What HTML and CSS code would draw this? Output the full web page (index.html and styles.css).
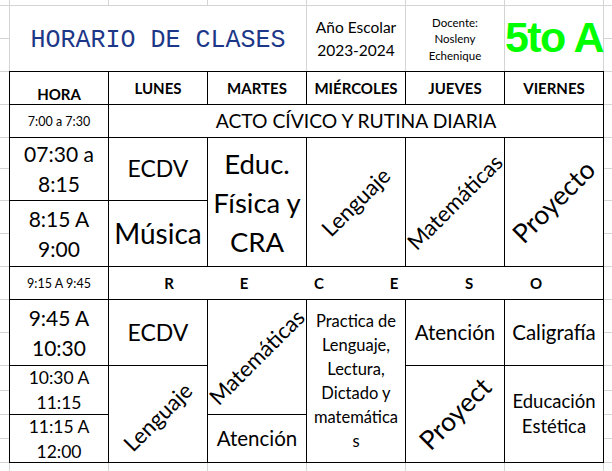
FILE: index.html
```html
<!DOCTYPE html>
<html lang="es">
<head>
<meta charset="utf-8">
<title>Horario de clases</title>
<link rel="stylesheet" href="styles.css">
</head>
<body>
<div class="sheet">
  <div class="strip"><span></span><span></span><span></span><span></span><span></span><span></span></div>
  <header class="title-row">
    <div class="tcell title">HORARIO DE CLASES</div>
    <div class="tcell year">Año Escolar<br>2023-2024</div>
    <div class="tcell teacher">Docente:<br>Nosleny<br>Echenique</div>
    <div class="tcell grade">5to A</div>
  </header>
  <div class="schedule">
    <div class="cell day hora">HORA</div>
    <div class="cell day">LUNES</div>
    <div class="cell day">MARTES</div>
    <div class="cell day">MIÉRCOLES</div>
    <div class="cell day">JUEVES</div>
    <div class="cell day">VIERNES</div>

    <div class="cell time-sm">7:00 a 7:30</div>
    <div class="cell wide act">ACTO CÍVICO Y RUTINA DIARIA</div>

    <div class="cell time-lg">07:30 a<br>8:15</div>
    <div class="cell subj-lg">ECDV</div>
    <div class="cell rows-2 educ">Educ.<br>Física y<br>CRA</div>
    <div class="cell rows-2"><span class="rot">Lenguaje</span></div>
    <div class="cell rows-2"><span class="rot">Matemáticas</span></div>
    <div class="cell rows-2"><span class="rot rot-lg">Proyecto</span></div>

    <div class="cell time-lg">8:15 A<br>9:00</div>
    <div class="cell subj-xl">Música</div>

    <div class="cell time-sm">9:15 A 9:45</div>
    <div class="cell wide recess"><b>R</b><b>E</b><b>C</b><b>E</b><b>S</b><b class="last">O</b></div>

    <div class="cell time-lg">9:45 A<br>10:30</div>
    <div class="cell subj-lg">ECDV</div>
    <div class="cell rows-2"><span class="rot">Matemáticas</span></div>
    <div class="cell rows-3 practice">Practica de<br>Lenguaje,<br>Lectura,<br>Dictado y<br>matemática<br>s</div>
    <div class="cell subj">Atención</div>
    <div class="cell subj">Caligrafía</div>

    <div class="cell time-md">10:30 A<br>11:15</div>
    <div class="cell rows-2"><span class="rot rot-low">Lenguaje</span></div>
    <div class="cell rows-2 clip"><span class="rot rot-lg">Proyect</span></div>
    <div class="cell rows-2 subj-sm">Educación<br>Estética</div>

    <div class="cell time-md">11:15 A<br>12:00</div>
    <div class="cell subj">Atención</div>
  </div>
  <div class="strip strip-bottom"><span></span><span></span><span></span><span></span><span></span><span></span></div>
</div>
</body>
</html>
```

FILE: styles.css
```css
* {
  box-sizing: border-box;
}

html,
body {
  margin: 0;
  padding: 0;
}

body {
  width: 612px;
  height: 471px;
  overflow: hidden;
  background: #fff;
  color: #000;
  font-family: Lato, "Noto Sans", sans-serif;
}

.sheet {
  width: 612px;
  height: 471px;
  overflow: hidden;
  background-color: #fff;
  background-image:
    linear-gradient(#d4d4d4, #d4d4d4), linear-gradient(#d4d4d4, #d4d4d4),
    linear-gradient(#d4d4d4, #d4d4d4), linear-gradient(#d4d4d4, #d4d4d4),
    linear-gradient(#d4d4d4, #d4d4d4), linear-gradient(#d4d4d4, #d4d4d4),
    linear-gradient(#d4d4d4, #d4d4d4), linear-gradient(#d4d4d4, #d4d4d4),
    linear-gradient(#d4d4d4, #d4d4d4), linear-gradient(#d4d4d4, #d4d4d4),
    linear-gradient(#d4d4d4, #d4d4d4), linear-gradient(#d4d4d4, #d4d4d4),
    linear-gradient(#d4d4d4, #d4d4d4), linear-gradient(#d4d4d4, #d4d4d4),
    linear-gradient(#d4d4d4, #d4d4d4), linear-gradient(#d4d4d4, #d4d4d4);
  background-size: 100% 1px;
  background-repeat: no-repeat;
  background-position:
    0 5px, 0 38px, 0 71px, 0 104px, 0 137px, 0 168px, 0 200px, 0 233px,
    0 266px, 0 299px, 0 332px, 0 365px, 0 390px, 0 414px, 0 438px, 0 462px;
}

/* empty spreadsheet strips above and below the table */
.strip {
  margin-left: 9px;
  width: 595px;
  height: 5px;
  display: grid;
  grid-template-columns: repeat(6, 99px);
  border-right: 1px solid #d4d4d4;
}

.strip span {
  border-left: 1px solid #d4d4d4;
}

.strip-bottom {
  height: 8px;
}

/* title row */
.title-row {
  margin-left: 9px;
  width: 595px;
  height: 66px;
  display: grid;
  grid-template-columns: 297px 99px 99px 99px;
  border-top: 1px solid #d4d4d4;
  border-right: 1px solid #d4d4d4;
}

.tcell {
  background: #fff;
  border-left: 1px solid #d4d4d4;
  display: flex;
  align-items: center;
  justify-content: center;
  text-align: center;
}

.title {
  font-family: "Liberation Mono", "DejaVu Sans Mono", monospace;
  font-size: 25px;
  color: #1d3788;
  padding-top: 4px;
}

.year {
  font-size: 15.5px;
  line-height: 23px;
}

.teacher {
  font-size: 11.5px;
  line-height: 16.5px;
  padding-top: 2px;
}

.grade {
  justify-content: flex-start;
  white-space: nowrap;
  font-family: "Liberation Sans", Arial, sans-serif;
  font-weight: 700;
  font-size: 43px;
  line-height: 43px;
  letter-spacing: -1.6px;
  color: #00ff00;
  padding-bottom: 3px;
}

/* schedule table */
.schedule {
  margin-left: 9px;
  width: 595px;
  display: grid;
  grid-template-columns: repeat(6, 98px);
  grid-template-rows: 32px 32px 62px 65px 32px 65px 48px 47px;
  gap: 1px;
  padding: 1px;
  background: #000;
}

.cell {
  background: #fff;
  display: flex;
  align-items: center;
  justify-content: center;
  text-align: center;
  line-height: 1.2;
}

.clip {
  overflow: hidden;
}

.wide {
  grid-column: span 5;
}

.rows-2 {
  grid-row: span 2;
}

.rows-3 {
  grid-row: span 3;
}

.day {
  font-weight: 700;
  font-size: 15px;
}

.hora {
  align-items: flex-end;
  padding-bottom: 1px;
}

.time-sm {
  font-size: 12.5px;
}

.time-lg {
  font-size: 21px;
  line-height: 30px;
}

.time-md {
  font-size: 17.5px;
  line-height: 25px;
}

.act {
  font-size: 19.3px;
}

.subj-lg {
  font-size: 23px;
}

.subj-xl {
  font-size: 28px;
}

.subj {
  font-size: 20.5px;
}

.subj-sm {
  font-size: 18.5px;
  line-height: 25px;
}

.educ {
  font-size: 27.5px;
  line-height: 39px;
}

.practice {
  font-size: 16.5px;
  line-height: 24px;
}

.recess {
  justify-content: flex-start;
  gap: 55px;
  padding-left: 50px;
  font-size: 15px;
}

.recess b {
  width: 20px;
  text-align: center;
}

.recess .last {
  margin-left: -8px;
}

.rot {
  display: block;
  white-space: nowrap;
  font-size: 22px;
  transform: rotate(-45deg);
}

.rot-lg {
  font-size: 26.5px;
}

.rot-low {
  transform: translateY(3px) rotate(-45deg);
}
```
